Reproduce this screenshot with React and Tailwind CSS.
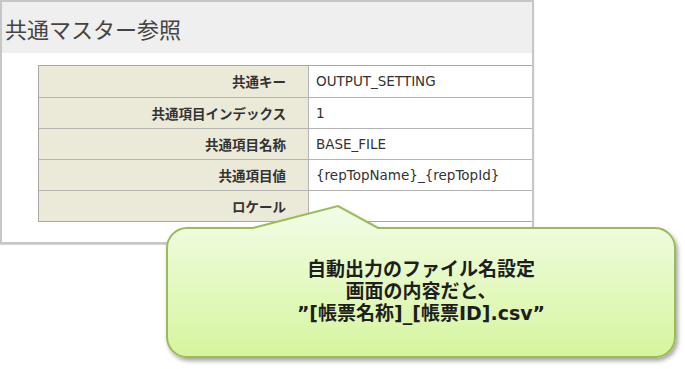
import React from "react";

const rows = [
  { label: "共通キー", value: "OUTPUT_SETTING" },
  { label: "共通項目インデックス", value: "1" },
  { label: "共通項目名称", value: "BASE_FILE" },
  { label: "共通項目値", value: "{repTopName}_{repTopId}" },
  { label: "ロケール", value: "" },
];

const jp = { fontFamily: '"DejaVu Sans", "Noto Sans CJK JP", sans-serif' };

function Callout() {
  return (
    <div className="absolute left-[160px] top-[200px] w-[525px] h-[169px]">
      <svg width="525" height="169" className="absolute left-0 top-0">
        <defs>
          <linearGradient id="cg" x1="0" y1="0" x2="0" y2="1">
            <stop offset="0" stopColor="#f2fde7" />
            <stop offset="1" stopColor="#d6f59e" />
          </linearGradient>
          <filter id="sh" x="-5%" y="-10%" width="110%" height="125%">
            <feDropShadow dx="2" dy="3" stdDeviation="2" floodColor="#000" floodOpacity="0.35" />
          </filter>
        </defs>
        <path
          d="M27 28 L93 28 L178 6 L218 28 L495 28 A20 20 0 0 1 515 48 L515 137 A20 20 0 0 1 495 157 L27 157 A20 20 0 0 1 7 137 L7 48 A20 20 0 0 1 27 28 Z"
          fill="url(#cg)"
          stroke="#9bbb59"
          strokeWidth="2"
          filter="url(#sh)"
        />
      </svg>
      <div
        className="absolute left-[7px] top-[58px] w-[508px] text-center font-bold text-[19px] leading-[22px] text-[#1e1e1e]"
        style={jp}
      >
        <div>自動出力のファイル名設定</div>
        <div>画面の内容だと、</div>
        <div>”[帳票名称]_[帳票ID].csv”</div>
      </div>
    </div>
  );
}

export default function App() {
  return (
    <div className="relative w-[685px] h-[369px] bg-white overflow-hidden">
      <div className="w-[534px] border-2 border-[#c6c6c6] bg-white shadow-[0_1px_1px_rgba(0,0,0,0.15)]">
        <div className="h-[51px] bg-[#efefef] flex items-center pl-[3px]">
          <h1
            className="text-[22px] text-[#444] font-normal leading-none"
            style={{ fontFamily: '"Noto Sans CJK JP", sans-serif' }}
          >
            共通マスター参照
          </h1>
        </div>
        <div className="pt-[12px] pb-[20px] pl-[36px]">
          <div className="border border-[#a8a8a8] border-r-0">
            {rows.map((r, i) => (
              <div
                key={r.label}
                className={`flex h-[31px] ${i > 0 ? "border-t border-[#b4b4b4]" : ""}`}
              >
                <div
                  className="w-[270px] bg-[#ebe9d8] border-r border-[#b4b4b4] flex items-center justify-end pr-[22px] text-[13.5px] font-bold text-[#333]"
                  style={{ fontFamily: '"Noto Sans CJK JP", sans-serif' }}
                >
                  {r.label}
                </div>
                <div
                  className="flex-1 flex items-center pl-[7px] text-[13.5px] text-[#333]"
                  style={jp}
                >
                  {r.value}
                </div>
              </div>
            ))}
          </div>
        </div>
      </div>
      <Callout />
    </div>
  );
}
